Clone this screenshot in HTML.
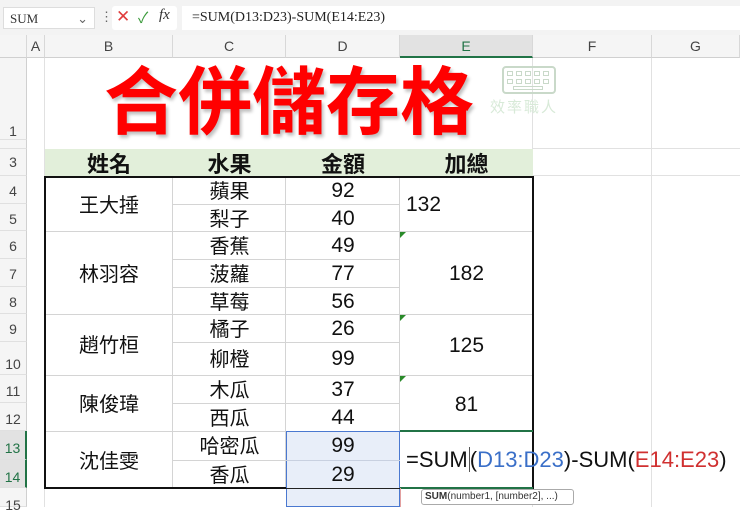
<!DOCTYPE html><html><head><meta charset="utf-8"><style>
body{margin:0;width:740px;height:507px;overflow:hidden;background:#fff;position:relative;font-family:"Liberation Sans","Noto Sans CJK TC",sans-serif}
div{position:absolute;box-sizing:border-box}
.t{font-family:"Noto Sans CJK TC",sans-serif;font-size:20px;color:#111;text-align:center;line-height:28px}
.n{font-family:"Liberation Sans",sans-serif;font-size:21px;color:#111;text-align:center}
.ch{top:35px;height:23px;font-size:14px;color:#444;text-align:center;line-height:23px;border-right:1px solid #d8d8d8;background:#f5f5f5;border-bottom:1px solid #d0d0d0}
.rh{left:0;width:27px;font-size:14px;color:#444;text-align:center;background:#f5f5f5;border-right:1px solid #d0d0d0;border-bottom:1px solid #e0e0e0}
.g{background:#e1e1e1}
.k{width:6px;height:5px;border:1px solid #c9d9c9}
</style></head><body>
<div style="left:0;top:0;width:740px;height:35px;background:#f3f3f3"></div>
<div style="left:3px;top:7px;width:92px;height:22px;background:#fff;border:1px solid #ddd;font-size:13px;color:#333;padding:3px 6px;font-family:'Liberation Serif',serif">SUM<span style="position:absolute;right:6px;color:#666">⌄</span></div>
<div style="left:100px;top:9px;color:#666;font-size:13px">⋮</div>
<div style="left:112px;top:6px;width:65px;height:24px;background:#fff;border-radius:3px"></div>
<div style="left:116px;top:7px;color:#e03c3c;font-size:17px">✕</div>
<div style="left:138px;top:7px;color:#3a9a3a;font-size:15px">✓</div>
<div style="left:159px;top:7px;font-family:'Liberation Serif',serif;font-style:italic;font-size:15px;color:#333">fx</div>
<div style="left:182px;top:6px;width:558px;height:24px;background:#fff;font-family:'Liberation Serif',serif;font-size:14px;color:#222;padding:4px 10px">=SUM(D13:D23)-SUM(E14:E23)</div>
<div class="ch" style="left:0;width:27px"></div>
<div class="ch" style="left:27px;width:18px">A</div>
<div class="ch" style="left:45px;width:128px">B</div>
<div class="ch" style="left:173px;width:113px">C</div>
<div class="ch" style="left:286px;width:114px">D</div>
<div class="ch" style="left:400px;width:133px;background:#e2e2e2;border-bottom:2px solid #217346;color:#217346">E</div>
<div class="ch" style="left:533px;width:119px">F</div>
<div class="ch" style="left:652px;width:88px">G</div>
<div class="rh" style="top:58px;height:82px;line-height:146px">1</div>
<div class="rh" style="top:140px;height:9px"></div>
<div class="rh" style="top:149px;height:27px;line-height:27px">3</div>
<div class="rh" style="top:176px;height:28px;line-height:30px">4</div>
<div class="rh" style="top:204px;height:27px;line-height:30px">5</div>
<div class="rh" style="top:231px;height:28px;line-height:30px">6</div>
<div class="rh" style="top:259px;height:28px;line-height:30px">7</div>
<div class="rh" style="top:287px;height:27px;line-height:30px">8</div>
<div class="rh" style="top:314px;height:28px;line-height:30px">9</div>
<div class="rh" style="top:342px;height:33px;line-height:44px">10</div>
<div class="rh" style="top:375px;height:28px;line-height:32px">11</div>
<div class="rh" style="top:403px;height:28px;line-height:32px">12</div>
<div class="rh" style="top:431px;height:29px;line-height:34px;background:#e2e2e2;color:#217346;border-right:2px solid #217346">13</div>
<div class="rh" style="top:460px;height:28px;line-height:34px;background:#e2e2e2;color:#217346;border-right:2px solid #217346">14</div>
<div class="rh" style="top:488px;height:19px;line-height:34px">15</div>
<div class="g" style="left:44px;top:58px;width:1px;height:449px"></div>
<div class="g" style="left:532px;top:58px;width:1px;height:449px"></div>
<div class="g" style="left:651px;top:58px;width:1px;height:449px"></div>
<div class="g" style="left:533px;top:148px;width:207px;height:1px"></div>
<div class="g" style="left:533px;top:175px;width:207px;height:1px"></div>
<div style="left:45px;top:149px;width:488px;height:27px;background:#e2efda"></div>
<div class="t" style="left:45px;top:149px;width:128px;font-weight:bold;font-size:22px;line-height:28px">姓名</div>
<div class="t" style="left:173px;top:149px;width:113px;font-weight:bold;font-size:22px;line-height:28px">水果</div>
<div class="t" style="left:286px;top:149px;width:114px;font-weight:bold;font-size:22px;line-height:28px">金額</div>
<div class="t" style="left:400px;top:149px;width:133px;font-weight:bold;font-size:22px;line-height:28px">加總</div>
<div style="left:44px;top:176px;width:490px;height:313px;border:2px solid #111"></div>
<div style="left:172px;top:178px;width:1px;height:309px;background:#d4d4d4"></div>
<div style="left:285px;top:178px;width:1px;height:309px;background:#d4d4d4"></div>
<div style="left:399px;top:178px;width:1px;height:309px;background:#d4d4d4"></div>
<div style="left:173px;top:204px;width:227px;height:1px;background:#d4d4d4"></div>
<div style="left:46px;top:231px;width:486px;height:1px;background:#d4d4d4"></div>
<div style="left:173px;top:259px;width:227px;height:1px;background:#d4d4d4"></div>
<div style="left:173px;top:287px;width:227px;height:1px;background:#d4d4d4"></div>
<div style="left:46px;top:314px;width:486px;height:1px;background:#d4d4d4"></div>
<div style="left:173px;top:342px;width:227px;height:1px;background:#d4d4d4"></div>
<div style="left:46px;top:375px;width:486px;height:1px;background:#d4d4d4"></div>
<div style="left:173px;top:403px;width:227px;height:1px;background:#d4d4d4"></div>
<div style="left:46px;top:431px;width:354px;height:1px;background:#d4d4d4"></div>
<div style="left:400px;top:430px;width:133px;height:2px;background:#217346"></div>
<div style="left:173px;top:460px;width:227px;height:1px;background:#d4d4d4"></div>
<div style="left:400px;top:487px;width:133px;height:2px;background:#217346"></div>
<div style="left:286px;top:431px;width:114px;height:76px;background:#e8eef9;border:1.5px solid #4a78d0"></div>
<div style="left:286px;top:460px;width:114px;height:1px;background:#c8d0e0"></div>
<div style="left:286px;top:488px;width:114px;height:1px;background:#222"></div>
<div style="left:400px;top:488px;width:1px;height:19px;background:#e3a0a0"></div>
<div class="t" style="left:45px;top:190px;width:128px">王大捶</div>
<div class="t" style="left:45px;top:259px;width:128px">林羽容</div>
<div class="t" style="left:45px;top:330px;width:128px">趙竹桓</div>
<div class="t" style="left:45px;top:389px;width:128px">陳俊瑋</div>
<div class="t" style="left:45px;top:446px;width:128px">沈佳雯</div>
<div class="t" style="left:173px;top:176px;width:113px">蘋果</div>
<div class="t" style="left:173px;top:204px;width:113px">梨子</div>
<div class="t" style="left:173px;top:231px;width:113px">香蕉</div>
<div class="t" style="left:173px;top:259px;width:113px">菠蘿</div>
<div class="t" style="left:173px;top:287px;width:113px">草莓</div>
<div class="t" style="left:173px;top:314px;width:113px">橘子</div>
<div class="t" style="left:173px;top:344px;width:113px">柳橙</div>
<div class="t" style="left:173px;top:375px;width:113px">木瓜</div>
<div class="t" style="left:173px;top:403px;width:113px">西瓜</div>
<div class="t" style="left:173px;top:431px;width:113px">哈密瓜</div>
<div class="t" style="left:173px;top:460px;width:113px">香瓜</div>
<div class="n" style="left:286px;top:179px;width:114px">92</div>
<div class="n" style="left:286px;top:207px;width:114px">40</div>
<div class="n" style="left:286px;top:234px;width:114px">49</div>
<div class="n" style="left:286px;top:262px;width:114px">77</div>
<div class="n" style="left:286px;top:290px;width:114px">56</div>
<div class="n" style="left:286px;top:317px;width:114px">26</div>
<div class="n" style="left:286px;top:347px;width:114px">99</div>
<div class="n" style="left:286px;top:378px;width:114px">37</div>
<div class="n" style="left:286px;top:406px;width:114px">44</div>
<div class="n" style="left:286px;top:434px;width:114px">99</div>
<div class="n" style="left:286px;top:463px;width:114px">29</div>
<div class="n" style="left:406px;top:193px">132</div>
<div class="n" style="left:400px;top:262px;width:133px">182</div>
<div class="n" style="left:400px;top:334px;width:133px">125</div>
<div class="n" style="left:400px;top:393px;width:133px">81</div>
<div style="left:400px;top:232px;width:0;height:0;border-top:6px solid #2a8a2a;border-right:6px solid transparent"></div>
<div style="left:400px;top:315px;width:0;height:0;border-top:6px solid #2a8a2a;border-right:6px solid transparent"></div>
<div style="left:400px;top:376px;width:0;height:0;border-top:6px solid #2a8a2a;border-right:6px solid transparent"></div>
<div style="left:406px;top:447px;font-size:22px;color:#111;white-space:nowrap">=SUM<span style="border-left:1px solid #555;margin-left:1px"></span>(<span style="color:#3a6fc8">D13:D23</span>)-SUM(<span style="color:#d03030">E14:E23</span>)</div>
<div style="left:421px;top:489px;width:153px;height:16px;border:1px solid #aaa;border-radius:3px;background:#fff;font-size:10px;color:#333;padding:1px 3px;white-space:nowrap"><b>SUM</b>(number1, [number2], ...)</div>
<div style="left:104px;top:54px;font-family:'Noto Sans CJK TC',sans-serif;font-weight:bold;font-size:74px;line-height:86px;color:#f00;letter-spacing:0px;white-space:nowrap;text-shadow:2px 3px 3px rgba(0,0,0,.25)">合併儲存格</div>
<div style="left:502px;top:66px;width:54px;height:28px;border:2px solid #c9d9c9;border-radius:4px"></div>
<div class="k" style="left:507px;top:71px"></div><div class="k" style="left:516px;top:71px"></div><div class="k" style="left:525px;top:71px"></div><div class="k" style="left:534px;top:71px"></div><div class="k" style="left:543px;top:71px"></div>
<div class="k" style="left:507px;top:79px"></div><div class="k" style="left:516px;top:79px"></div><div class="k" style="left:525px;top:79px"></div><div class="k" style="left:534px;top:79px"></div><div class="k" style="left:543px;top:79px"></div>
<div class="k" style="left:513px;top:86px;width:30px;height:4px"></div>
<div style="left:490px;top:96px;font-family:'Noto Sans CJK TC',sans-serif;font-size:15px;color:#d8ead8;letter-spacing:2px">效率職人</div>
</body></html>
